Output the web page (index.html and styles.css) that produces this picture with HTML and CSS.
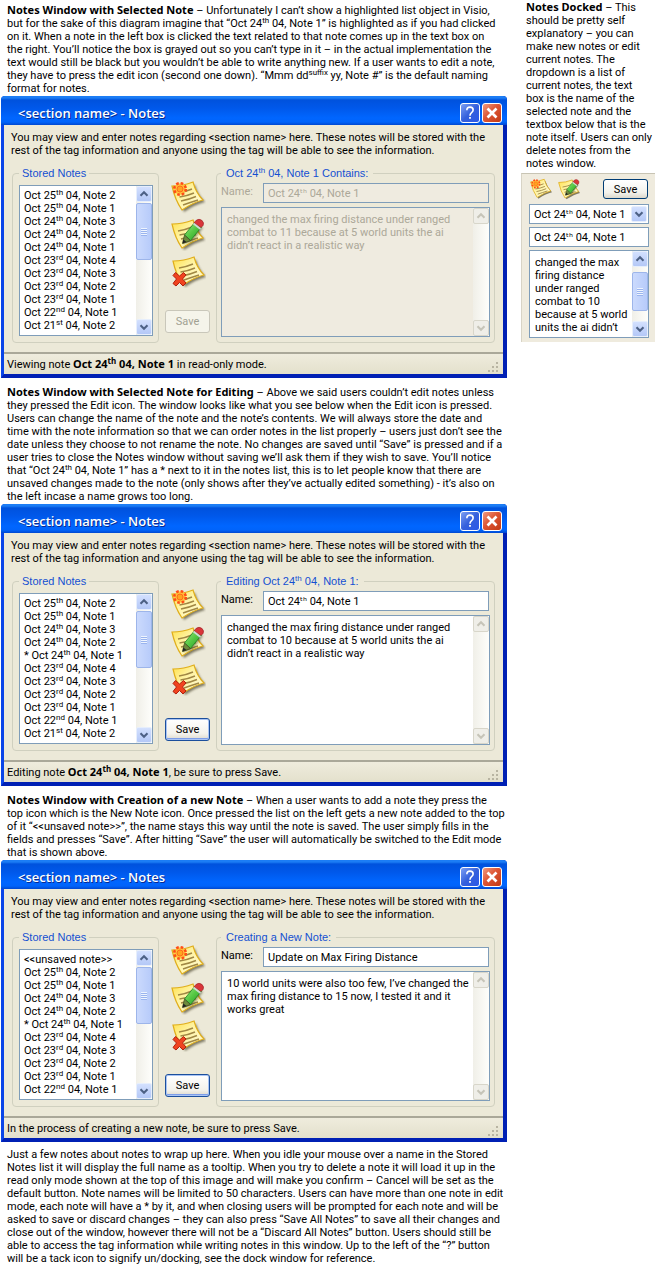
FILE: index.html
```html
<!DOCTYPE html>
<html lang="en">
<head>
<meta charset="utf-8">
<title>Notes Window</title>
<link rel="stylesheet" href="styles.css">
</head>
<body>
<svg class="defs" aria-hidden="true">
  <defs>
    <linearGradient id="paper" x1="0" y1="0" x2="1" y2="1">
      <stop offset="0" stop-color="#ffe04a"/><stop offset=".4" stop-color="#fff3a0"/><stop offset=".75" stop-color="#fff8c4"/><stop offset="1" stop-color="#ffdf5c"/>
    </linearGradient>
    <linearGradient id="pencil" x1="0" y1="0" x2="1" y2="1">
      <stop offset="0" stop-color="#a6e98a"/><stop offset=".5" stop-color="#55c843"/><stop offset="1" stop-color="#259428"/>
    </linearGradient>
    <filter id="soft" x="-20%" y="-20%" width="150%" height="150%"><feGaussianBlur stdDeviation="1"/></filter>
    <symbol id="note" viewBox="0 0 36 34">
      <path d="M5 8 25 5Q28 15 35 22 26 24 14 32 8 20 5 8Z" fill="#5c563e" opacity=".75" filter="url(#soft)"/>
      <path d="M2 6Q13 6 23 2 26 13 33 20 24 22 12 30 5 20 2 6Z" fill="url(#paper)" stroke="#e0ae1c" stroke-width="1.200"/>
      <path d="M8 13Q15 12 22 9M9.500 17Q17 16 24 13M11 21Q19 19.500 26 16.500M13 25Q20 22.500 28 20" stroke="#a08744" stroke-width="1.400" fill="none"/>
    </symbol>
    <symbol id="new" viewBox="0 0 36 34">
      <use href="#note" width="36" height="34"/>
      <circle cx="10" cy="9" r="5.800" fill="#ffc23a"/>
      <circle cx="10" cy="9" r="5.800" fill="none" stroke="#ff4d17" stroke-width="2.600" stroke-dasharray="2.600 1.950"/>
      <circle cx="10" cy="9" r="3" fill="#ffa41f" stroke="#ff6a1c" stroke-width="1"/>
    </symbol>
    <symbol id="edit" viewBox="0 0 36 34">
      <use href="#note" y="1" width="36" height="34"/>
      <path d="M13 27 16 19 26 6 33 11 22 25Z" fill="#3c4a20" opacity=".5" filter="url(#soft)"/>
      <path d="M14.500 18 25 5 31.500 10 20.500 23.500Z" fill="url(#pencil)" stroke="#1f8522" stroke-width=".8"/>
      <path d="M12.500 26.500 14.500 18 20.500 23.500Z" fill="#6d8a3c" stroke="#3c4a20" stroke-width=".7"/>
      <path d="M12.500 26.500 13.300 22.500 16.500 25Z" fill="#222"/>
      <path d="M24 6 26 3.500Q29 1 32 3.500 34.500 6 33 8.500L31 10.500Z" fill="#d9363a" stroke="#a02428" stroke-width=".7"/>
      <path d="M23.500 6.500 30.500 12" stroke="#cfd8d4" stroke-width="1.800"/>
    </symbol>
    <symbol id="delete" viewBox="0 0 36 34">
      <use href="#note" x="1" y="1" width="36" height="34"/>
      <path d="M5.500 18.500 9.500 22 13.500 18.500 16 21 12.500 25 16 29 13 32 9.500 28.500 6 32 3 29.500 6.500 25 3 21.500Z" fill="#f0431f" stroke="#b0200e" stroke-width="1"/>
    </symbol>
    <symbol id="up" viewBox="0 0 16 16"><path d="M4 10 8 6 12 10" fill="none" stroke="currentColor" stroke-width="2.400"/></symbol>
    <symbol id="down" viewBox="0 0 16 16"><path d="M4 6 8 10 12 6" fill="none" stroke="currentColor" stroke-width="2.400"/></symbol>
    <symbol id="help" viewBox="0 0 20 20"><path d="M6.500 7Q6.500 3.500 10 3.500T13.500 6.800Q13.500 8.500 11.500 9.800 10 10.900 10 13" fill="none" stroke="#fff" stroke-width="1.800"/><path d="M9 14.500h2v2H9z" fill="#fff"/></symbol>
    <symbol id="close" viewBox="0 0 20 20"><path d="M5 5 15 15M15 5 5 15" stroke="#fff" stroke-width="3"/></symbol>
    <symbol id="grip" viewBox="0 0 12 12"><path d="M9 1h2v2H9zM5 5h2v2H5zM9 5h2v2H9zM1 9h2v2H1zM5 9h2v2H5zM9 9h2v2H9z" fill="#b8b4a2"/></symbol>
  </defs>
</svg>
<div class="page">
  <main class="main">
    <p class="copy"><b>Notes Window with Selected Note</b> – Unfortunately I can’t show a highlighted list object in Visio,<br>
but for the sake of this diagram imagine that “Oct 24<sup>th</sup> 04, Note 1” is highlighted as if you had clicked<br>
on it. When a note in the left box is clicked the text related to that note comes up in the text box on<br>
the right. You’ll notice the box is grayed out so you can’t type in it – in the actual implementation the<br>
text would still be black but you wouldn’t be able to write anything new. If a user wants to edit a note,<br>
they have to press the edit icon (second one down). “Mmm dd<sup>suffix</sup> yy, Note #” is the default naming<br>
format for notes.</p>

    <section class="window">
      <header class="titlebar"><h2>&lt;section name&gt; - Notes</h2>
        <button class="cap help" aria-label="Help"><svg><use href="#help"/></svg></button>
        <button class="cap close" aria-label="Close"><svg><use href="#close"/></svg></button></header>
      <div class="body">
        <p class="intro">You may view and enter notes regarding &lt;section name&gt; here. These notes will be stored with the<br>rest of the tag information and anyone using the tag will be able to see the information.</p>
        <div class="panels">
          <fieldset class="stored"><legend>Stored Notes</legend>
            <div class="box">
              <ul class="list">
                <li>Oct 25<sup>th</sup> 04, Note 2</li><li>Oct 25<sup>th</sup> 04, Note 1</li><li>Oct 24<sup>th</sup> 04, Note 3</li><li>Oct 24<sup>th</sup> 04, Note 2</li><li>Oct 24<sup>th</sup> 04, Note 1</li><li>Oct 23<sup>rd</sup> 04, Note 4</li><li>Oct 23<sup>rd</sup> 04, Note 3</li><li>Oct 23<sup>rd</sup> 04, Note 2</li><li>Oct 23<sup>rd</sup> 04, Note 1</li><li>Oct 22<sup>nd</sup> 04, Note 1</li><li>Oct 21<sup>st</sup> 04, Note 2</li>
              </ul>
              <div class="scroll"><button class="arrow" aria-label="Scroll up"><svg><use href="#up"/></svg></button><div class="track"><div class="thumb"></div></div><button class="arrow" aria-label="Scroll down"><svg><use href="#down"/></svg></button></div>
            </div>
          </fieldset>
          <div class="tools">
            <button class="tool" aria-label="New note"><svg><use href="#new"/></svg></button>
            <button class="tool" aria-label="Edit note"><svg><use href="#edit"/></svg></button>
            <button class="tool" aria-label="Delete note"><svg><use href="#delete"/></svg></button>
            <button class="save" disabled>Save</button>
          </div>
          <fieldset class="detail readonly"><legend>Oct 24<sup>th</sup> 04, Note 1 Contains:</legend>
            <div class="name"><label for="n1">Name:</label><input id="n1" value="Oct 24ᵗʰ 04, Note 1" disabled></div>
            <div class="box">
              <textarea aria-label="Note" disabled>changed the max firing distance under ranged
combat to 11 because at 5 world units the ai
didn’t react in a realistic way</textarea>
              <div class="scroll off"><button class="arrow" aria-label="Scroll up" disabled><svg><use href="#up"/></svg></button><div class="track"></div><button class="arrow" aria-label="Scroll down" disabled><svg><use href="#down"/></svg></button></div>
            </div>
          </fieldset>
        </div>
      </div>
      <footer class="status"><p>Viewing note <b>Oct 24<sup>th</sup> 04, Note 1</b> in read-only mode.</p><svg class="grip"><use href="#grip"/></svg></footer>
    </section>

    <p class="copy"><b>Notes Window with Selected Note for Editing</b> – Above we said users couldn’t edit notes unless<br>
they pressed the Edit icon. The window looks like what you see below when the Edit icon is pressed.<br>
Users can change the name of the note and the note’s contents. We will always store the date and<br>
time with the note information so that we can order notes in the list properly – users just don’t see the<br>
date unless they choose to not rename the note. No changes are saved until “Save” is pressed and if a<br>
user tries to close the Notes window without saving we’ll ask them if they wish to save. You’ll notice<br>
that “Oct 24<sup>th</sup> 04, Note 1” has a * next to it in the notes list, this is to let people know that there are<br>
unsaved changes made to the note (only shows after they’ve actually edited something) - it’s also on<br>
the left incase a name grows too long.</p>

    <section class="window">
      <header class="titlebar"><h2>&lt;section name&gt; - Notes</h2>
        <button class="cap help" aria-label="Help"><svg><use href="#help"/></svg></button>
        <button class="cap close" aria-label="Close"><svg><use href="#close"/></svg></button></header>
      <div class="body">
        <p class="intro">You may view and enter notes regarding &lt;section name&gt; here. These notes will be stored with the<br>rest of the tag information and anyone using the tag will be able to see the information.</p>
        <div class="panels">
          <fieldset class="stored"><legend>Stored Notes</legend>
            <div class="box">
              <ul class="list">
                <li>Oct 25<sup>th</sup> 04, Note 2</li><li>Oct 25<sup>th</sup> 04, Note 1</li><li>Oct 24<sup>th</sup> 04, Note 3</li><li>Oct 24<sup>th</sup> 04, Note 2</li><li>* Oct 24<sup>th</sup> 04, Note 1</li><li>Oct 23<sup>rd</sup> 04, Note 4</li><li>Oct 23<sup>rd</sup> 04, Note 3</li><li>Oct 23<sup>rd</sup> 04, Note 2</li><li>Oct 23<sup>rd</sup> 04, Note 1</li><li>Oct 22<sup>nd</sup> 04, Note 1</li><li>Oct 21<sup>st</sup> 04, Note 2</li>
              </ul>
              <div class="scroll"><button class="arrow" aria-label="Scroll up"><svg><use href="#up"/></svg></button><div class="track"><div class="thumb"></div></div><button class="arrow" aria-label="Scroll down"><svg><use href="#down"/></svg></button></div>
            </div>
          </fieldset>
          <div class="tools">
            <button class="tool" aria-label="New note"><svg><use href="#new"/></svg></button>
            <button class="tool" aria-label="Edit note"><svg><use href="#edit"/></svg></button>
            <button class="tool" aria-label="Delete note"><svg><use href="#delete"/></svg></button>
            <button class="save active">Save</button>
          </div>
          <fieldset class="detail"><legend>Editing Oct 24<sup>th</sup> 04, Note 1:</legend>
            <div class="name"><label for="n2">Name:</label><input id="n2" value="Oct 24ᵗʰ 04, Note 1"></div>
            <div class="box">
              <textarea aria-label="Note">changed the max firing distance under ranged
combat to 10 because at 5 world units the ai
didn’t react in a realistic way</textarea>
              <div class="scroll off"><button class="arrow" aria-label="Scroll up" disabled><svg><use href="#up"/></svg></button><div class="track"></div><button class="arrow" aria-label="Scroll down" disabled><svg><use href="#down"/></svg></button></div>
            </div>
          </fieldset>
        </div>
      </div>
      <footer class="status"><p>Editing note <b>Oct 24<sup>th</sup> 04, Note 1</b>, be sure to press Save.</p><svg class="grip"><use href="#grip"/></svg></footer>
    </section>

    <p class="copy"><b>Notes Window with Creation of a new Note</b> – When a user wants to add a note they press the<br>
top icon which is the New Note icon. Once pressed the list on the left gets a new note added to the top<br>
of it “&lt;&lt;unsaved note&gt;&gt;”, the name stays this way until the note is saved. The user simply fills in the<br>
fields and presses “Save”. After hitting “Save” the user will automatically be switched to the Edit mode<br>
that is shown above.</p>

    <section class="window">
      <header class="titlebar"><h2>&lt;section name&gt; - Notes</h2>
        <button class="cap help" aria-label="Help"><svg><use href="#help"/></svg></button>
        <button class="cap close" aria-label="Close"><svg><use href="#close"/></svg></button></header>
      <div class="body">
        <p class="intro">You may view and enter notes regarding &lt;section name&gt; here. These notes will be stored with the<br>rest of the tag information and anyone using the tag will be able to see the information.</p>
        <div class="panels">
          <fieldset class="stored"><legend>Stored Notes</legend>
            <div class="box">
              <ul class="list">
                <li>&lt;&lt;unsaved note&gt;&gt;</li><li>Oct 25<sup>th</sup> 04, Note 2</li><li>Oct 25<sup>th</sup> 04, Note 1</li><li>Oct 24<sup>th</sup> 04, Note 3</li><li>Oct 24<sup>th</sup> 04, Note 2</li><li>* Oct 24<sup>th</sup> 04, Note 1</li><li>Oct 23<sup>rd</sup> 04, Note 4</li><li>Oct 23<sup>rd</sup> 04, Note 3</li><li>Oct 23<sup>rd</sup> 04, Note 2</li><li>Oct 23<sup>rd</sup> 04, Note 1</li><li>Oct 22<sup>nd</sup> 04, Note 1</li>
              </ul>
              <div class="scroll"><button class="arrow" aria-label="Scroll up"><svg><use href="#up"/></svg></button><div class="track"><div class="thumb"></div></div><button class="arrow" aria-label="Scroll down"><svg><use href="#down"/></svg></button></div>
            </div>
          </fieldset>
          <div class="tools">
            <button class="tool" aria-label="New note"><svg><use href="#new"/></svg></button>
            <button class="tool" aria-label="Edit note"><svg><use href="#edit"/></svg></button>
            <button class="tool" aria-label="Delete note"><svg><use href="#delete"/></svg></button>
            <button class="save active">Save</button>
          </div>
          <fieldset class="detail"><legend>Creating a New Note:</legend>
            <div class="name"><label for="n3">Name:</label><input id="n3" value="Update on Max Firing Distance"></div>
            <div class="box">
              <textarea aria-label="Note">10 world units were also too few, I’ve changed the
max firing distance to 15 now, I tested it and it
works great</textarea>
              <div class="scroll off"><button class="arrow" aria-label="Scroll up" disabled><svg><use href="#up"/></svg></button><div class="track"></div><button class="arrow" aria-label="Scroll down" disabled><svg><use href="#down"/></svg></button></div>
            </div>
          </fieldset>
        </div>
      </div>
      <footer class="status"><p>In the process of creating a new note, be sure to press Save.</p><svg class="grip"><use href="#grip"/></svg></footer>
    </section>

    <p class="copy">Just a few notes about notes to wrap up here. When you idle your mouse over a name in the Stored<br>
Notes list it will display the full name as a tooltip. When you try to delete a note it will load it up in the<br>
read only mode shown at the top of this image and will make you confirm – Cancel will be set as the<br>
default button. Note names will be limited to 50 characters. Users can have more than one note in edit<br>
mode, each note will have a * by it, and when closing users will be prompted for each note and will be<br>
asked to save or discard changes – they can also press “Save All Notes” to save all their changes and<br>
close out of the window, however there will not be a “Discard All Notes” button. Users should still be<br>
able to access the tag information while writing notes in this window. Up to the left of the “?” button<br>
will be a tack icon to signify un/docking, see the dock window for reference.</p>
  </main>

  <aside class="side">
    <p class="sidecopy"><b>Notes Docked</b> – This<br>should be pretty self<br>explanatory – you can<br>make new notes or edit<br>current notes. The<br>dropdown is a list of<br>current notes, the text<br>box is the name of the<br>selected note and the<br>textbox below that is the<br>note itself. Users can only<br>delete notes from the<br>notes window.</p>
    <div class="dock">
      <div class="dockbar">
        <button class="tool" aria-label="New note"><svg><use href="#new"/></svg></button>
        <button class="tool" aria-label="Edit note"><svg><use href="#edit"/></svg></button>
        <button class="save">Save</button>
      </div>
      <div class="combo"><select aria-label="Current notes"><option>Oct 24ᵗʰ 04, Note 1</option></select><span class="arrow"><svg><use href="#down"/></svg></span></div>
      <input aria-label="Note name" value="Oct 24ᵗʰ 04, Note 1">
      <div class="box">
        <textarea aria-label="Note">changed the max
firing distance
under ranged
combat to 10
because at 5 world
units the ai didn’t</textarea>
        <div class="scroll"><button class="arrow" aria-label="Scroll up"><svg><use href="#up"/></svg></button><div class="track mid"><div class="thumb"></div></div><button class="arrow" aria-label="Scroll down"><svg><use href="#down"/></svg></button></div>
      </div>
    </div>
  </aside>
</div>
</body>
</html>
```
FILE: styles.css
```css
* { box-sizing: border-box; }
body { margin: 0; background: #fff; color: #000; }
body, button, input, select, textarea {
  font: 11px/13px Roboto, Tahoma, "DejaVu Sans Condensed", sans-serif;
}
b { font-family: "Noto Sans", Tahoma, sans-serif; line-height: 0; }
p, h2, ul { margin: 0; padding: 0; }
svg { display: block; }
button { padding: 0; margin: 0; border: 0; background: none; color: inherit; }
sup { font-size: 8px; line-height: 0; vertical-align: 4px; }
.defs { position: absolute; width: 0; height: 0; }

.page { display: grid; grid-template-columns: minmax(0, 1fr) 135px; column-gap: 14px; align-items: start; }
.main { padding-left: 1px; }
.copy { padding: 8px 0 1px 6px; white-space: nowrap; }
.copy:first-child { padding-top: 4px; }
.copy:last-child { padding: 6px 0 0 6px; }

.window {
  border: solid #0831d9; border-width: 0 4px 4px 3px;
  border-color: #0831d9 #0020b4 #0020b4 #0a45e8;
  border-radius: 4px 4px 0 0; background: #0054e3;
}
.titlebar {
  display: flex; align-items: center; gap: 2px; height: 29px; margin: 0 -4px 0 -3px; padding: 4px 5px 0 17px;
  border-radius: 4px 4px 0 0;
  background: linear-gradient(#1c7df5 0, #1c7df5 2px, #0052dd 4px, #0058ea 12px, #0066ff 22px, #0064fb 26px, #0048d0 29px);
}
.titlebar h2 { flex: 1; font: 600 13px/18px "Open Sans", "Trebuchet MS", sans-serif; color: #fff; text-shadow: 1px 1px 0 #0a2a90; }
.cap { width: 20px; height: 20px; border: 1px solid #fff; border-radius: 3px; }
.cap svg { width: 18px; height: 18px; }
.help { background: linear-gradient(135deg, #7d9ff2, #3560dc 50%, #2a58e8); }
.close { background: linear-gradient(135deg, #f09a80, #dd5534 45%, #c23a14); }

.body { padding: 6px 8px 9px; background: #ece9d8; }
.intro { margin: 0 0 10px -1px; white-space: nowrap; }
.panels { display: grid; grid-template-columns: 147px 57px minmax(0, 1fr); }
fieldset { min-width: 0; margin: 0; border: 1px solid #d0d0bf; border-radius: 4px; }
legend { padding: 0 3px; font: 11px/13px "Liberation Sans", Arial, sans-serif; color: #1450d2; white-space: nowrap; }
.stored { padding: 5px 5px 6px 6px; }
.detail { display: flex; flex-direction: column; gap: 4px; padding: 3px 4px 5px; }
.detail legend { padding: 0 5px; }
.box { display: flex; flex: 1; border: 1px solid #7f9db9; background: #fff; }
.list { flex: 1; padding: 3px 0 3px 4px; list-style: none; white-space: nowrap; }

.scroll { display: flex; flex-direction: column; width: 16px; flex: none; background: linear-gradient(90deg, #f0efe8, #fefefb); }
.arrow {
  width: 16px; height: 16px; flex: none; border: 1px solid #e6eefc; border-radius: 2px;
  background: linear-gradient(#d3e0fe, #b4c8f7); color: #4d6185;
}
.arrow svg { width: 14px; height: 14px; }
.track { flex: 1; padding-top: 1px; }
.thumb {
  height: 57px; border: 1px solid #9db5ea; border-radius: 2px;
  background:
    repeating-linear-gradient(#eef4fe 0 1px, #9ab4ee 1px 2px) center / 6px 8px no-repeat,
    linear-gradient(90deg, #cbdafd, #b7cbfa);
}
.mid { padding-top: 5px; }
.mid .thumb { height: 39px; }
.off .arrow { background: #efeee8; border-color: #d8d6ca; color: #c6c4b8; }

.tools { display: flex; flex-direction: column; align-items: center; gap: 3px; padding: 13px 6px 0; }
.tool { width: 36px; height: 34px; }
.tool svg { width: 100%; height: 100%; }
.save {
  width: 45px; height: 23px; border: 1px solid #003c74; border-radius: 3px;
  background: linear-gradient(#fff, #f3f2ec 70%, #dcd8cc);
}
.tools .save { margin-top: 19px; }
.active { border-color: #1c4f9c; box-shadow: inset 0 0 0 1px #a9c4f5, inset 0 -2px 0 0 #7c9de8; }
.save:disabled { border-color: #c9c7ba; background: #f5f4ea; color: #a1a192; }

.name { display: grid; grid-template-columns: 42px minmax(0, 1fr); align-items: center; padding-right: 1px; }
.name label { padding-bottom: 3px; }
input { width: 100%; height: 20px; padding: 0 4px; border: 1px solid #7f9db9; border-radius: 0; background: #fff; color: #000; }
textarea { flex: 1; min-width: 0; padding: 5px 0 0 5px; border: 0; background: none; color: #000; resize: none; overflow: hidden; white-space: pre; display: block; }
.readonly label, .readonly input, .readonly textarea { color: #aca899; }
.readonly input, .readonly .box { background: #efebe0; }

.status { display: flex; align-items: center; justify-content: space-between; height: 22px; padding: 0 4px 0 3px; border-top: 2px solid #aaa899; background: linear-gradient(#efecdd, #e3e0cc); white-space: nowrap; }
.grip { width: 12px; height: 12px; align-self: flex-end; margin-bottom: 1px; }

.sidecopy { padding: 1px 0 3px 5px; white-space: nowrap; }
.dock { display: flex; flex-direction: column; gap: 3px; margin-right: 1px; padding: 3px 6px 4px 7px; border-top: 1px solid #c8c4b4; border-left: 1px solid #d8d4c6; background: #efebde; }
.dockbar { display: flex; align-items: center; gap: 4px; height: 24px; }
.dockbar .tool { width: 24px; height: 22px; }
.dockbar .save { margin-left: auto; height: 20px; margin-right: 1px; }
.combo { display: grid; grid-template-columns: minmax(0, 1fr) 16px; align-items: center; height: 20px; padding-right: 1px; border: 1px solid #7f9db9; background: #fff; }
.combo select { grid-area: 1 / 1 / 2 / 3; width: 100%; height: 18px; padding: 0 4px; border: 0; background: none; color: #000; appearance: none; }
.combo .arrow { grid-area: 1 / 2; pointer-events: none; }
.dock textarea { height: 86px; }
```
